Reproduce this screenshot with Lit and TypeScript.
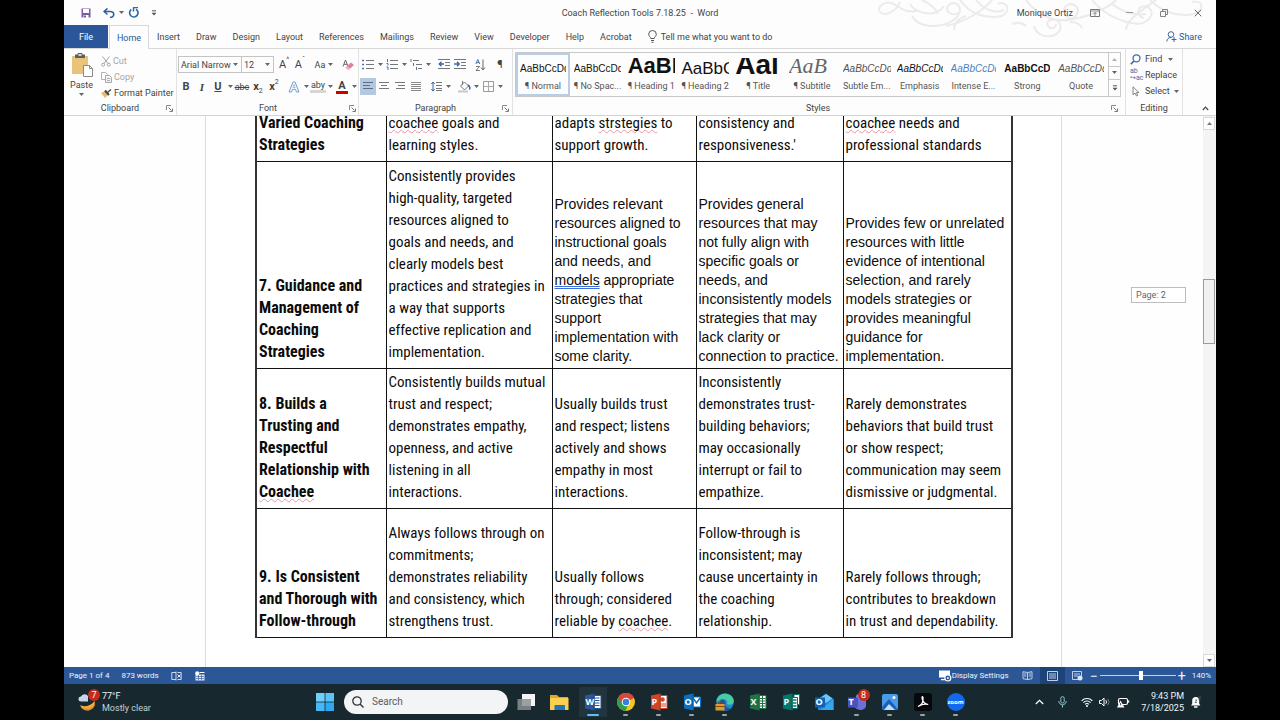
import { LitElement, html, css, svg, nothing } from "lit";
import { customElement } from "lit/decorators.js";
import { classMap } from "lit/directives/class-map.js";

const icon = (w: number, h: number, body: unknown) =>
  html`<svg width=${w} height=${h} viewBox="0 0 ${w} ${h}" fill="none" aria-hidden="true">${body}</svg>`;

const caret = icon(5, 3, svg`<path d="M0 0h5L2.500 3z" fill="#666"/>`);

const lines = (rows: [number, number, number][], color = "#777") =>
  rows.map(([x, y, w]) => svg`<path d="M${x} ${y}h${w}" stroke=${color} />`);

const icons = {
  save: icon(10, 10, svg`<path d="M.5.5h9v9h-9z" fill="#7d5aa6"/><path d="M2 1h6v4H2z" fill="#fff"/><path d="M2.500 7h5v3h-5z" fill="#fff"/><path d="M3 7.500h2v2H3z" fill="#7d5aa6"/>`),
  undo: icon(12, 10, svg`<path d="M1 3.500h6c5 0 5 5.500 0 6" stroke="#2f5f9f" stroke-width="1.600"/><path d="M4.500.5L1.200 3.500l3.300 3" stroke="#2f5f9f" stroke-width="1.600"/>`),
  redo: icon(11, 11, svg`<path d="M3.200 2.500A4.200 4.200 0 1 0 8 2.200" stroke="#2f6ea5" stroke-width="1.700"/><path d="M5 .5h5M5.500.5v4" stroke="#2f6ea5" stroke-width="1.500"/>`),
  custom: icon(6, 6, svg`<path d="M1 .8h4" stroke="#555"/><path d="M.5 2.800h5L3 5.500z" fill="#555"/>`),
  paste: icon(22, 24, svg`<path d="M1 3h16v18H1z" fill="#eac37a"/><path d="M4 1.500h2.500a2.500 2 0 0 1 5 0H14V5H4z" fill="#5e5e5e"/><path d="M7.500 1.200h3v1.500h-3z" fill="#fff"/><path d="M12.500 12.500h6l3 3v8h-9z" fill="#fff" stroke="#8a8a8a"/><path d="M18.500 12.500v3h3" stroke="#8a8a8a"/>`),
  cut: icon(10, 11, svg`<path d="M1.500.5l5.500 7M8.500.5L3 7.500" stroke="#a5a5a5"/><circle cx="2.200" cy="8.700" r="1.500" stroke="#a5a5a5"/><circle cx="7.800" cy="8.700" r="1.500" stroke="#a5a5a5"/>`),
  copy: icon(11, 11, svg`<path d="M.5.5h4l2 2v5h-6z" fill="#fff" stroke="#b0b0b0"/><path d="M4.500 3.500h4l2 2v5h-6z" fill="#f4f4f4" stroke="#a8a8a8"/><path d="M6 6.500h3M6 8.500h3" stroke="#b0b0b0"/>`),
  painter: icon(11, 9, svg`<path d="M0 4l4-2 3 4-3 3z" fill="#e8b872"/><path d="M4 1.500l4 4.500" stroke="#444" stroke-width="2"/><path d="M6.500 3.500L10 .5" stroke="#555" stroke-width="1.600"/>`),
  eraser: icon(12, 12, svg`<path d="M1 7.500L3.500 1 6 7.500M2 5.300h3" stroke="#666"/><path d="M3.500 8.500L9 3.500l3 2.500-5.500 5z" fill="#e07f98"/><path d="M3.500 8.500l3 2.500 1.700-1.500-3-2.500z" fill="#f0b8c6"/>`),
  effectA: icon(12, 12, svg`<path d="M1 11L5 1h2l4 10H8.500l-1-2.700h-3l-1 2.700z" stroke="#6f9fd0"/><path d="M4.800 6.500L6 3.300l1.200 3.200z" fill="#fff" stroke="#6f9fd0" stroke-width=".6"/>`),
  bullets: icon(12, 11, svg`<path d="M0 1.500h2M0 5.500h2M0 9.500h2" stroke="#4a77ad" stroke-width="1.600"/>${lines([[4, 1.5, 8], [4, 5.5, 8], [4, 9.5, 8]])}`),
  numbers: icon(12, 11, svg`<path d="M1.500 0v3M.5 4.500h1.500v2M.5 8h1.500v3" stroke="#4a77ad"/>${lines([[4, 1.5, 8], [4, 5.5, 8], [4, 9.5, 8]])}`),
  multi: icon(12, 11, svg`<path d="M1 0v3M3.500 4v3M6.500 8v3" stroke="#4a77ad"/>${lines([[3, 1.5, 6], [6, 5.5, 6], [8, 9.5, 4]])}`),
  outdent: icon(12, 11, svg`${lines([[0, 0.5, 12], [7, 3.5, 5], [7, 6.5, 5], [0, 9.5, 12]])}<path d="M6 5H1.500M3.500 2.800L1.200 5l2.300 2.200" stroke="#3568a5" stroke-width="1.300"/>`),
  indent: icon(12, 11, svg`${lines([[0, 0.5, 12], [7, 3.5, 5], [7, 6.5, 5], [0, 9.5, 12]])}<path d="M0 5h5M3 2.800L5.300 5 3 7.200" stroke="#3568a5" stroke-width="1.300"/>`),
  sort: icon(11, 12, svg`<path d="M.8 5L2.800.5 4.800 5M1.500 3.600h2.600" stroke="#3568a5" stroke-width=".9"/><path d="M1 7.500h3.500L1 11.500h3.800" stroke="#666" stroke-width=".9"/><path d="M8 .5v10M6 8.500l2 2.500 2-2.500" stroke="#666"/>`),
  left: icon(10, 9, lines([[0, 0.5, 10], [0, 3.5, 7], [0, 6.5, 10]], "#5c6e86")),
  center: icon(10, 9, lines([[0, 0.5, 10], [2, 3.5, 6], [0, 6.5, 10]])),
  right: icon(10, 9, lines([[0, 0.5, 10], [3, 3.5, 7], [1, 6.5, 9]])),
  justify: icon(10, 9, lines([[0, 0.5, 10], [0, 2.5, 10], [0, 4.5, 10], [0, 6.5, 10], [0, 8.5, 10]], "#8a8a8a")),
  spacing: icon(11, 11, svg`<path d="M2 1v9M.3 3L2 1l1.700 2M.3 8L2 10l1.700-2" stroke="#3568a5"/>${lines([[5, 1.5, 6], [5, 4.5, 6], [5, 7.5, 6], [5, 9.5, 6]])}`),
  shading: icon(13, 12, svg`<path d="M2.500 5L6.500 1l4 4-4 4z" stroke="#777"/><path d="M4.500 0v4" stroke="#777"/><path d="M10 4c2 1 2 3 1.500 4.500" stroke="#3568a5" stroke-width="1.500"/><path d="M0 10.500h10" stroke="#c8c8c8" stroke-width="2"/>`),
  borders: icon(11, 11, svg`<path d="M.5.5h10v10H.5z" stroke="#999"/><path d="M5.500 1v9M1 5.500h9" stroke="#aaa"/>`),
  find: icon(11, 11, svg`<circle cx="6.500" cy="4.300" r="3.500" stroke="#3f6ea8" stroke-width="1.300"/><path d="M4 7L.8 10.200" stroke="#3f6ea8" stroke-width="1.700"/>`),
  select: icon(11, 11, svg`<path d="M3 .8v8l2-1.800 1.500 3 1.200-.6L6.400 6.500H9z" stroke="#777" stroke-width=".9"/>`),
  launcher: icon(7, 7, svg`<path d="M.5 5V.5H5" stroke="#888"/><path d="M2.500 2.500l3 3M6.500 3.500v3h-3" stroke="#777"/>`),
  bulb: icon(9, 13, svg`<path d="M2.800 8.500C2.800 7 .7 6.500.7 4.200a3.800 3.700 0 0 1 7.600 0C8.300 6.500 6.200 7 6.200 8.500zM3 10.500h3M3.500 12.300h2" stroke="#444" stroke-width=".9"/>`),
  share: icon(11, 11, svg`<circle cx="5" cy="3.500" r="2.800" stroke="#3f64a0"/><path d="M.8 10.500C1 8 2.500 6.500 5 6.500M8 6v5M5.500 8.500h5" stroke="#3f64a0"/>`),
  display: icon(10, 8, svg`<path d="M.5.5h9v7h-9z" stroke="#777"/><path d="M.5 2h9M5 7V3.500M3.500 5L5 3.500 6.500 5" stroke="#777" stroke-width=".8"/>`),
  min: icon(8, 8, svg`<path d="M0 3.500h7" stroke="#999"/>`),
  restore: icon(8, 8, svg`<path d="M.5 2.500h5v5h-5zM2.500 2.500v-2h5v5h-2" stroke="#777" stroke-width=".9"/>`),
  close: icon(8, 8, svg`<path d="M.8.8l6.500 6.500M7.300.8L.8 7.300" stroke="#666"/>`),
  chevUp: icon(7, 5, svg`<path d="M.8 4L3.500 1.200 6.200 4" stroke="#444" stroke-width="1.200"/>`),
  up: icon(5, 3, svg`<path d="M0 3h5L2.500 0z" fill="#777"/>`),
  upSoft: icon(5, 3, svg`<path d="M0 3h5L2.500 0z" fill="#b0b0b0"/>`),
  proof: icon(11, 10, svg`<path d="M5 1.500H.8v7H5M5 .5v9M6.500 1.500h3.700v7H6.500" stroke="#dfe7f5" stroke-width=".9"/><path d="M6.500 3.500l3 3M9.500 3.500l-3 3" stroke="#fff" stroke-width=".9"/>`),
  macro: icon(10, 10, svg`<path d="M.5 3.500h9v6h-9z" fill="#dfe7f5"/><circle cx="2.200" cy="2.200" r="2" fill="#fff"/><path d="M4.500 1.500h5" stroke="#fff"/><path d="M1 5.500h8M1 7.500h8M3.500 4v5M6.500 4v5" stroke="#2b579a" stroke-width=".6"/>`),
  dispSet: icon(13, 12, svg`<path d="M0 .5h11v7H0zM2 9h5v1.300H2z" fill="#fff"/><circle cx="8.800" cy="8" r="3" fill="#2b579a" stroke="#fff" stroke-width="1.200"/><circle cx="8.800" cy="8" r="1" fill="#fff"/>`),
  read: icon(11, 9, svg`<path d="M5.500 1.500L1 .7v7l4.500.8 4.500-.8v-7zM5.500 1.500v7M2 3h2.300M2 5h2.300M6.800 3H9M6.800 5H9" stroke="#cfdcf0" stroke-width=".9"/>`),
  print: icon(11, 10, svg`<path d="M.5.5h10v9H.5zM2 3h7M2 5h7M2 7h7" stroke="#d5e0f2" stroke-width=".9"/>`),
  web: icon(11, 10, svg`<path d="M.5.5h9v8h-9zM2 3h6M2 5h4" stroke="#cfdcf0" stroke-width=".9"/><circle cx="8" cy="7" r="2.500" fill="#dbe5f5"/>`),
  weather: icon(19, 19, svg`<path d="M16.500 8a7.500 7.500 0 0 1-14.500 4c3 2 10 2 14.500-4z" fill="#f3a93c"/><path d="M4 14.500c6 3 12 0 13-5 1 6-8 11-13 5z" fill="#e9892a"/><path d="M3 8.500a2.500 2.500 0 0 1 0-5 4 4 0 0 1 7-.5v5.500z" fill="#c9d3ee"/>`),
  windows: icon(18, 18, svg`<path d="M0 0h8.600v8.600H0z" fill="#6fd0fb"/><path d="M9.400 0H18v8.600H9.400z" fill="#58c4f8"/><path d="M0 9.400h8.600V18H0z" fill="#45b8f5"/><path d="M9.400 9.400H18V18H9.400z" fill="#2fa8f0"/>`),
  search: icon(12, 12, svg`<circle cx="5" cy="5" r="4.200" stroke="#333" stroke-width="1.300"/><path d="M8 8l3.500 3.500" stroke="#333" stroke-width="1.400"/>`),
  chevTray: icon(9, 6, svg`<path d="M.8 5L4.500 1.300 8.200 5" stroke="#fff" stroke-width="1.300"/>`),
  mic: icon(9, 12, svg`<rect x="2.800" y=".6" width="3.400" height="6.500" rx="1.700" stroke="#8cc6cf"/><path d="M.8 5c0 5 7.400 5 7.400 0M4.500 9v2.500" stroke="#8cc6cf"/>`),
  wifi: icon(12, 10, svg`<path d="M.6 3.800a7.600 7.600 0 0 1 10.800 0M2.400 5.600a5 5 0 0 1 7.200 0M4.100 7.300a2.600 2.600 0 0 1 3.800 0" stroke="#fff" stroke-width="1.100"/><circle cx="6" cy="9" r="1" fill="#fff"/>`),
  sound: icon(12, 10, svg`<path d="M.5 3.500h2L5 1v8L2.500 6.500h-2z" stroke="#fff"/><path d="M6.800 3.200q1.500 1.800 0 3.600" stroke="#fff"/><path d="M8.700 1.700q3 3.300 0 6.600" stroke="#6b7b80"/>`),
  battery: icon(13, 11, svg`<rect x="1.500" y="1.500" width="9" height="6" rx="1.500" stroke="#fff" stroke-width="1.200"/><path d="M11.500 3.500v2" stroke="#fff" stroke-width="1.500"/><path d="M3.500 3.500L7.500 10.500H0z" fill="#fff"/><path d="M3.600 6v2.300" stroke="#182a31" stroke-width=".8"/>`),
  bell: icon(12, 12, svg`<path d="M1 9.500l1.200-1.700V4.500a3.500 3.500 0 0 1 7 0v3.300l1.200 1.700z" fill="#fff"/><path d="M4 11h3.500" stroke="#fff" stroke-width="1.500"/><path d="M5 4h2L5 6.500h2M8.500 1h2.300L8.500 3.200h2.300" stroke="#4b5b60" stroke-width=".8"/>`),
};

const office = (color: string, dark: string, page: unknown) =>
  icon(18, 18, svg`${page}<path d="M1 2.500L10.500.5v17L1 15.500z" fill=${color}/><path d="M9.500.7l1-.2v17l-1-.2z" fill=${dark}/>`);

const ruled = (c: string) => svg`<path d="M10 2.500h7v13h-7z" fill="#fff" stroke=${c}/><path d="M11 5h4.500M11 7.500h4.500M11 10h4.500M11 12.500h4.500" stroke=${c}/>`;

interface App { name: string; art: unknown; running?: boolean; active?: boolean; letter?: string; badge?: string; }

const apps: App[] = [
  { name: "Task view", art: icon(19, 18, svg`<path d="M5 1h13v12H5z" fill="#f4f4f4"/><path d="M.5 6H14v11H.5z" fill="#8b8f92" opacity=".85"/>`) },
  { name: "File Explorer", art: icon(19, 18, svg`<path d="M0 2h7l2 2h9v4H0z" fill="#e3a524"/><path d="M0 5h18.500v12H0z" fill="#fbd050"/><path d="M4.500 12h10.500v5H4.500z" fill="#2476b8"/>`) },
  { name: "Word", active: true, running: true, letter: "W", art: office("#2b579a", "#1f4683", ruled("#2b579a")) },
  { name: "Chrome", running: true, art: icon(18, 18, svg`<circle cx="9" cy="9" r="9" fill="#f5c51f"/><path d="M9 9L1.200 4.500A9 9 0 0 1 16.800 4.500L17 5z" fill="#dd4538"/><path d="M9 9L1.200 4.500A9 9 0 0 0 8.500 18L12 10z" fill="#2f9e50"/><path d="M9 5h8.100A9 9 0 0 0 1.200 4.500L5.500 11z" fill="#dd4538"/><circle cx="9" cy="9" r="4.300" fill="#fff"/><circle cx="9" cy="9" r="3.300" fill="#3c7de0"/>`) },
  { name: "PowerPoint", running: true, letter: "P", art: office("#d04526", "#a93519", svg`<path d="M10 2.500h7v13h-7z" fill="#fff" stroke="#d04526"/><circle cx="12.500" cy="6.500" r="2.300" fill="#d04526"/><path d="M11 11h5M11 13h5" stroke="#d04526"/>`) },
  { name: "Outlook", running: true, letter: "O", art: office("#0b6fc2", "#0a5ca0", svg`<path d="M9 4h8.500v10H9z" fill="#fff" stroke="#0b6fc2"/><path d="M10 5l3.500 5L17 5" stroke="#0b6fc2" stroke-width="1.500"/>`) },
  { name: "Edge", running: true, art: icon(19, 18, svg`<circle cx="10" cy="9" r="8.800" fill="#2389cf"/><path d="M1.500 8C3-2 18-1 18.800 8c0 4-5 4.500-7 3 2-4-3-6-6-4.500C3.500 7.500 2 9 1.500 8z" fill="#49c9a5"/><path d="M6 7c-3 3-2 8 2 10.500 3 1 6 0 8-2.500-4 1-7-2-5.500-5C10 7 8 6 6 7z" fill="#17599c"/><path d="M.5 11h9v6.500h-9z" fill="#e39a2d"/><path d="M.5 13.500h9M3.500 11v-1.500h3V11" stroke="#7a4b12"/>`) },
  { name: "Excel", letter: "X", art: office("#217346", "#185c37", svg`<path d="M10 2.500h7v13h-7z" fill="#fff" stroke="#217346"/><path d="M11 5.500h5.500M11 8h5.500M11 10.500h5.500M11 13h5.500M13.500 3v12" stroke="#217346"/>`) },
  { name: "Publisher", letter: "P", art: office("#077568", "#055d53", svg`<path d="M12 1.500h5.500v10H12z" fill="#fff" stroke="#077568"/><path d="M10 4.500h5.500v11H10z" fill="#fff" stroke="#077568"/><path d="M11 7h3.500M11 10h3.500M11 13h3.500" stroke="#077568" stroke-width="1.300"/>`) },
  { name: "New Outlook", letter: "O", art: icon(20, 18, svg`<path d="M4 6l8-5.500L19.500 6v11H4z" fill="#1a86d8"/><path d="M6 5l6-4 6.500 4.500L12 10z" fill="#6cc6f5"/><path d="M19.500 6v11H6z" fill="#35a5ec"/><path d="M1 4.500h10v10H1z" fill="#0f63b5"/>`) },
  { name: "Teams", running: true, letter: "T", badge: "8", art: icon(20, 18, svg`<circle cx="12" cy="4" r="3" fill="#7b83eb"/><path d="M7 6.500h12v6c0 5-8 6-11 2z" fill="#6b6fd6"/><path d="M1 4.500h10v10H1z" fill="#4b53bc"/>`) },
  { name: "Photos", running: true, art: icon(18, 18, svg`<rect x="1" y="1" width="16" height="16" rx="2" fill="#4a9bea"/><path d="M1 14L8 6l9 10.500H2z" fill="#1c5fb8"/><path d="M3 17l5-6 6 6z" fill="#bfe0fb"/><circle cx="13" cy="4.500" r="1.500" fill="#fff"/>`) },
  { name: "Acrobat", running: true, art: icon(18, 18, svg`<rect width="18" height="18" rx="3" fill="#06080c"/><path d="M4 13.500c4-1.500 5.500-5 5-9-.3-1.500-1.500-1-.8 1.500.8 3 3 5 6 5.500-3-1-7 0-10.200 2z" stroke="#fff" stroke-width="1.200"/>`) },
  { name: "Zoom", running: true, letter: "zoom", art: icon(18, 18, svg`<circle cx="9" cy="9" r="9" fill="#1468f0"/>`) },
];

const tabs = ["Home", "Insert", "Draw", "Design", "Layout", "References", "Mailings", "Review", "View", "Developer", "Help", "Acrobat"];

const gallery: [string, string, string][] = [
  ["AaBbCcDd", "¶ Normal", ""],
  ["AaBbCcDd", "¶ No Spac...", ""],
  ["AaBb", "¶ Heading 1", "h1"],
  ["AaBbC", "¶ Heading 2", "h2"],
  ["Aal", "¶ Title", "title"],
  ["AaB", "¶ Subtitle", "subtitle"],
  ["AaBbCcDd", "Subtle Em...", "it soft"],
  ["AaBbCcDd", "Emphasis", "it"],
  ["AaBbCcDd", "Intense E...", "it blue"],
  ["AaBbCcD", "Strong", "bold"],
  ["AaBbCcDd", "Quote", "it soft"],
];

const sp = (t: string) => html`<span class="spell">${t}</span>`;

const rows: { cls: string; head: unknown; cells: unknown[]; wide?: boolean }[] = [
  {
    cls: "r6",
    head: html`Varied Coaching<br>Strategies`,
    cells: [
      html`${sp("coachee")} goals and<br>learning styles.`,
      html`adapts ${sp("strstegies")} to<br>support growth.`,
      html`consistency and<br>responsiveness.'`,
      html`${sp("coachee")} needs and<br>professional standards`,
    ],
  },
  {
    cls: "r7",
    wide: true,
    head: html`7. Guidance and<br>Management of<br>Coaching<br>Strategies`,
    cells: [
      html`Consistently provides<br>high-quality, targeted<br>resources aligned to<br>goals and needs, and<br>clearly models best<br>practices and strategies in<br>a way that supports<br>effective replication and<br>implementation.`,
      html`Provides relevant<br>resources aligned to<br>instructional goals<br>and needs, and<br><span class="grammar">models</span> appropriate<br>strategies that<br>support<br>implementation with<br>some clarity.`,
      html`Provides general<br>resources that may<br>not fully align with<br>specific goals or<br>needs, and<br>inconsistently models<br>strategies that may<br>lack clarity or<br>connection to practice.`,
      html`Provides few or unrelated<br>resources with little<br>evidence of intentional<br>selection, and rarely<br>models strategies or<br>provides meaningful<br>guidance for<br>implementation.`,
    ],
  },
  {
    cls: "r8",
    head: html`8. Builds a<br>Trusting and<br>Respectful<br>Relationship with<br>${sp("Coachee")}`,
    cells: [
      html`Consistently builds mutual<br>trust and respect;<br>demonstrates empathy,<br>openness, and active<br>listening in all<br>interactions.`,
      html`Usually builds trust<br>and respect; listens<br>actively and shows<br>empathy in most<br>interactions.`,
      html`Inconsistently<br>demonstrates trust-<br>building behaviors;<br>may occasionally<br>interrupt or fail to<br>empathize.`,
      html`Rarely demonstrates<br>behaviors that build trust<br>or show respect;<br>communication may seem<br>dismissive or judgmental.`,
    ],
  },
  {
    cls: "r9",
    head: html`9. Is Consistent<br>and Thorough with<br>Follow-through`,
    cells: [
      html`Always follows through on<br>commitments;<br>demonstrates reliability<br>and consistency, which<br>strengthens trust.`,
      html`Usually follows<br>through; considered<br>reliable by ${sp("coachee")}.`,
      html`Follow-through is<br>inconsistent; may<br>cause uncertainty in<br>the coaching<br>relationship.`,
      html`Rarely follows through;<br>contributes to breakdown<br>in trust and dependability.`,
    ],
  },
];

const shared = css`
  * { box-sizing: border-box; }
  button, input, select { font: inherit; color: inherit; background: none; border: 0; margin: 0; padding: 0; }
  button, a { white-space: nowrap; }
  svg { display: block; flex: none; }
`;

@customElement("word-titlebar")
class WordTitlebar extends LitElement {
  static styles = [shared, css`
    :host { display: block; position: relative; background: #fdfdfd; color: #444; }
    .swirl { position: absolute; right: 0; top: 0; }
    .bar { position: relative; display: grid; grid-template-columns: 1fr auto 1fr; align-items: center; height: 25px; }
    .quick { display: flex; align-items: center; gap: 4px; padding-left: 17px; }
    .quick button { display: flex; }
    .quick .gap { margin-left: 8px; }
    .win { display: flex; align-items: center; justify-content: flex-end; padding-right: 14px; gap: 26px; }
    .win .user { margin-right: -9px; }
    .tabs { position: relative; display: flex; height: 24px; border-bottom: 1px solid #d8d8d8; align-items: stretch; }
    .tabs button { padding: 0 8px; }
    .tabs .file { background: #2b579a; color: #fff; width: 44px; }
    .tabs .on { color: #2b579a; background: #fdfdfd; border: 1px solid #d8d8d8; border-bottom: 0; margin-bottom: -1px; margin-left: 1px; width: 40px; padding: 0; }
    .tabs .tell { display: flex; align-items: center; gap: 4px; }
    .tabs .share { display: flex; align-items: center; gap: 2px; margin-left: auto; padding: 0 14px; color: #2b579a; }
  `];
  render() {
    return html`
      <svg class="swirl" width="340" height="40" viewBox="0 0 340 40" fill="none" stroke="#edeaed" stroke-width="2" aria-hidden="true">
        <path d="M24 2C20 12 8 17 4 12 0 6 10 0 18 4c8 6 16 10 24 6"/>
        <path d="M36 16c6 12 30 14 44 2 8-8 2-18-6-14-8 6 2 14 10 8M34 4c6 10 26 14 34 2M46 0c8 4 14 8 16 14"/>
        <path d="M70 26C90 22 108 10 116 0M84 0c8 12 24 20 42 16 10-6 4-16-4-12M78 30c0-8 6-12 12-14M100 0c8 10 20 14 28 10"/>
        <path d="M150 0c10 14 26 22 42 20 14-4 12-16 2-16-8 2-8 12 0 14M136 24c6-2 10-2 14 2"/>
        <path d="M158 26c4 16 30 12 26-2-4-8-16-4-12 2 2 4 8 2 8-2M194 22c6 0 10 2 12 6"/>
        <path d="M190 20c22-2 42-12 50-20M216 0c8 10 24 22 46 24 14-2 18-14 8-18-10 0-10 10-2 12"/>
        <path d="M250 30c0-10 16-20 30-30M274 0c10 10 26 18 44 14 12-6 8-14-2-12M236 4c8 6 20 12 34 10"/>
      </svg>
      <div class="bar">
        <div class="quick">
          <button aria-label="Save">${icons.save}</button>
          <button class="gap" aria-label="Undo">${icons.undo}</button>
          <button aria-label="Undo options">${caret}</button>
          <button aria-label="Redo">${icons.redo}</button>
          <button class="gap" aria-label="Customize toolbar">${icons.custom}</button>
        </div>
        <div>Coach Reflection Tools 7.18.25&nbsp; -&nbsp; Word</div>
        <div class="win">
          <span class="user">Monique Ortiz</span>
          <button aria-label="Ribbon display">${icons.display}</button>
          <button aria-label="Minimize">${icons.min}</button>
          <button aria-label="Restore">${icons.restore}</button>
          <button aria-label="Close">${icons.close}</button>
        </div>
      </div>
      <nav class="tabs">
        <button class="file">File</button>
        ${tabs.map((t, i) => html`<button class=${classMap({ on: i === 0 })}>${t}</button>`)}
        <button class="tell">${icons.bulb}Tell me what you want to do</button>
        <button class="share">${icons.share}Share</button>
      </nav>`;
  }
}

@customElement("word-ribbon")
class WordRibbon extends LitElement {
  static styles = [shared, css`
    :host { box-sizing: border-box; display: flex; height: 67px; background: #fdfdfd; color: #444; border-bottom: 1px solid #d4d4d4; }
    .group { display: grid; grid-template-rows: 1fr 14px; border-right: 1px solid #e2e2e2; }
    .foot { display: grid; grid-template-columns: 10px 1fr 10px; text-align: center; align-items: center; }
    .clip { width: 113px; }
    .clip .body { display: flex; padding-top: 4px; gap: 4px; }
    .paste { display: flex; flex-direction: column; align-items: center; width: 31px; margin-left: 2px; gap: 2px; line-height: 12px; color: #444; }
    .list { display: flex; flex-direction: column; }
    .list button { display: flex; align-items: center; gap: 2px; height: 16px; }
    .dim { color: #a5a5a5; }
    .rows { display: grid; grid-template-rows: 17px 17px; row-gap: 5px; padding: 7px 1px 0; align-content: start; }
    .row { display: flex; align-items: center; }
    .row button { display: flex; align-items: center; justify-content: center; height: 17px; width: 16px; }
    .row .c { width: 8px; }
    .row .w { width: 24px; gap: 3px; }
    .sep { width: 4px; }
    .field { position: relative; display: flex; align-items: center; border: 1px solid #c4c4c4; height: 17px; margin-right: -1px; }
    .field select { appearance: none; height: 15px; width: 100%; padding: 0 2px; }
    .field svg { position: absolute; right: 3px; top: 6px; }
    .name { width: 64px; }
    .size { width: 33px; margin-right: 2px; }
    .font { width: 182px; }
    .para { width: 154px; }
    .ltr { font-size: 11px; }
    .sm { font-size: 7px; line-height: 8px; align-self: flex-start; }
    .lo { align-self: flex-end; }
    .b { font-weight: 700; }
    .i { font-style: italic; font-family: "Liberation Serif", serif; font-weight: 700; }
    .u { text-decoration: underline; font-weight: 700; }
    .s { text-decoration: line-through; }
    .red { border-bottom: 3px solid #c00; line-height: 11px; font-weight: 700; padding: 0 2px; font-size: 11px; }
    .hl { border-bottom: 3px solid #d6d6d6; line-height: 10px; padding: 0 1px; }
    .row .pressed { background: #b4c8e0; }
    .styles { flex: 1; min-width: 0; padding: 0 4px 0 2px; }
    .gallery { display: flex; border: 1px solid #c8c8c8; height: 45px; margin-top: 3px; }
    .items { display: grid; grid-template-columns: repeat(11, 1fr); flex: 1; min-width: 0; }
    .style { display: grid; grid-template-rows: 25px 14px; min-width: 0; padding: 0 2px; color: #555; text-align: center; border: 2px solid transparent; }
    .style.sel { border-color: #b9cde6; }
    .prev { display: flex; align-items: center; overflow: hidden; margin-top: 3px; color: #111; font: 10px/14px "Liberation Sans", Arial, sans-serif; white-space: nowrap; }
    .h1 { font-size: 22px; font-weight: 700; align-items: flex-start; line-height: 16px; }
    .h2 { font-size: 17px; }
    .title { font-size: 28px; font-weight: 700; align-items: flex-start; line-height: 14px; }
    .subtitle { font: italic 22px/16px "Liberation Serif", serif; color: #666; align-items: flex-start; }
    .it { font-style: italic; }
    .soft { color: #555; }
    .blue { color: #4f81bd; }
    .bold { font-weight: 700; }
    .scroll { display: grid; width: 12px; border-left: 1px solid #c8c8c8; }
    .scroll button { display: grid; place-items: center; }
    .scroll button + button { border-top: 1px solid #c8c8c8; }
    .edit { width: 57px; }
    .edit .list { padding: 2px 0 0 4px; }
    .edit .list button { gap: 4px; }
    .ab { font-size: 7px; line-height: 7px; color: #3f6ea8; text-align: left; width: 11px; }
    .end { width: 33px; display: flex; align-items: flex-end; justify-content: flex-end; padding: 0 7px 4px 0; }
  `];
  private btn(body: unknown, label: string, cls = "") {
    return html`<button class=${cls} aria-label=${label}>${body}</button>`;
  }
  private foot(label: string, launch = true) {
    return html`<div class="foot"><span></span><span>${label}</span>${launch ? this.btn(icons.launcher, label + " options") : nothing}</div>`;
  }
  private drop(label: string) {
    return this.btn(caret, label + " options", "c");
  }
  render() {
    return html`
      <section class="group clip">
        <div class="body">
          <button class="paste">${icons.paste}<span>Paste</span>${caret}</button>
          <div class="list">
            <button class="dim">${icons.cut}Cut</button>
            <button class="dim">${icons.copy}Copy</button>
            <button>${icons.painter}Format Painter</button>
          </div>
        </div>
        ${this.foot("Clipboard")}
      </section>
      <section class="group font">
        <div class="rows">
          <div class="row">
            <label class="field name"><select aria-label="Font"><option>Arial Narrow</option></select>${caret}</label>
            <label class="field size"><select aria-label="Font size"><option>12</option></select>${caret}</label>
            ${this.btn(html`<span class="ltr">A</span><span class="sm">^</span>`, "Grow font")}
            ${this.btn(html`<span class="ltr">A</span><span class="sm">ˇ</span>`, "Shrink font")}
            <span class="sep"></span>
            ${this.btn(html`Aa${caret}`, "Change case", "w")}
            <span class="sep"></span>
            ${this.btn(icons.eraser, "Clear formatting")}
          </div>
          <div class="row">
            ${this.btn(html`<span class="ltr b">B</span>`, "Bold")}
            ${this.btn(html`<span class="ltr i">I</span>`, "Italic")}
            ${this.btn(html`<span class="ltr u">U</span>`, "Underline")}
            ${this.drop("Underline")}
            ${this.btn(html`<span class="s">abc</span>`, "Strikethrough")}
            ${this.btn(html`<b class="ltr">x</b><span class="sm lo">2</span>`, "Subscript")}
            ${this.btn(html`<b class="ltr">x</b><span class="sm">2</span>`, "Superscript")}
            <span class="sep"></span>
            ${this.btn(icons.effectA, "Text effects")}${this.drop("Text effects")}
            ${this.btn(html`<span class="hl">aby</span>`, "Highlight")}${this.drop("Highlight")}
            ${this.btn(html`<span class="red">A</span>`, "Font color")}${this.drop("Font color")}
          </div>
        </div>
        ${this.foot("Font")}
      </section>
      <section class="group para">
        <div class="rows">
          <div class="row">
            ${this.btn(icons.bullets, "Bullets")}${this.drop("Bullets")}
            ${this.btn(icons.numbers, "Numbering")}${this.drop("Numbering")}
            ${this.btn(icons.multi, "Multilevel list")}${this.drop("Multilevel list")}
            <span class="sep"></span>
            ${this.btn(icons.outdent, "Decrease indent")}${this.btn(icons.indent, "Increase indent")}
            <span class="sep"></span>
            ${this.btn(icons.sort, "Sort")}
            <span class="sep"></span>
            ${this.btn(html`<span class="ltr">¶</span>`, "Show marks")}
          </div>
          <div class="row">
            ${this.btn(icons.left, "Align left", "pressed")}${this.btn(icons.center, "Center")}${this.btn(icons.right, "Align right")}${this.btn(icons.justify, "Justify")}
            <span class="sep"></span>
            ${this.btn(icons.spacing, "Line spacing")}${this.drop("Line spacing")}
            <span class="sep"></span>
            ${this.btn(icons.shading, "Shading")}${this.drop("Shading")}
            ${this.btn(icons.borders, "Borders")}${this.drop("Borders")}
          </div>
        </div>
        ${this.foot("Paragraph")}
      </section>
      <section class="group styles">
        <div class="gallery">
          <div class="items">
            ${gallery.map(([p, l, c], i) => html`<button class=${classMap({ style: true, sel: i === 0 })}><span class="prev ${c}">${p}</span><span>${l}</span></button>`)}
          </div>
          <div class="scroll">
            ${this.btn(icons.upSoft, "Previous styles")}${this.btn(caret, "Next styles")}${this.btn(icons.custom, "More styles")}
          </div>
        </div>
        ${this.foot("Styles")}
      </section>
      <section class="group edit">
        <div class="list">
          <button>${icons.find}Find&nbsp;${caret}</button>
          <button><span class="ab">ab<br>↪ac</span>Replace</button>
          <button>${icons.select}Select${caret}</button>
        </div>
        ${this.foot("Editing", false)}
      </section>
      <div class="end">${this.btn(icons.chevUp, "Collapse ribbon")}</div>`;
  }
}

@customElement("word-document")
class WordDocument extends LitElement {
  static styles = [shared, css`
    :host { display: grid; grid-template-columns: 1fr 13px; position: relative; min-height: 0; overflow: hidden; background: #fefefe; }
    .canvas { display: flex; flex-direction: column; justify-content: flex-end; align-items: center; overflow: hidden; min-height: 0; }
    .page { display: flex; flex-direction: column; justify-content: flex-end; flex: 1 0 auto; width: 76%; max-width: 857px; padding: 0 48px 29px 49px; border: solid #dcdcdc; border-width: 0 1px; background: #fff; }
    table { border-collapse: collapse; table-layout: fixed; width: 100%; color: #0c0c0c; font: 14px/22px "Liberation Sans", Arial, sans-serif; }
    th, td { border: 1px solid #111; padding: 0 0 5px 2px; vertical-align: bottom; text-align: left; white-space: nowrap; }
    tr > :first-child { border-left: 2px solid #333; }
    tr > :last-child { border-right: 2px solid #333; }
    .k { width: 130px; }
    .a { width: 166px; }
    .b { width: 144px; }
    .c { width: 147px; }
    .n { font-family: "Liberation Sans Narrow", "Arial Narrow", "Roboto Condensed", "Liberation Sans", sans-serif; font-size: 15px; }
    th.n { font-size: 16px; }
    .w { line-height: 19px; padding-bottom: 2px; }
    .r7 { height: 207px; }
    .r8 { height: 140px; }
    .r9 { height: 129px; }
    .spell { text-decoration: underline wavy #d8506490 1px; text-underline-offset: 1px; text-decoration-skip-ink: none; }
    .grammar { text-decoration: underline double #3b6fe0 1px; text-underline-offset: 1px; text-decoration-skip-ink: none; }
    .bar { display: grid; grid-template-rows: 13px 1fr 13px; padding: 1px 1px 0 0; background: #f4f4f4; }
    .bar button { display: grid; place-items: center; background: #fff; border: 1px solid #d8d8d8; }
    .track { display: grid; grid-template-rows: 149fr 65fr 310fr; }
    .thumb { grid-row: 2; background: #f0f0f0; border: 1px solid #9a9a9a; }
    .tip { position: absolute; right: 30px; top: 31%; width: 55px; height: 16px; padding: 0 4px; line-height: 15px; border: 1px solid #bdbdbd; background: #fff; color: #666; }
  `];
  render() {
    return html`
      <main class="canvas">
        <article class="page">
          <table>
            <colgroup><col class="k"><col class="a"><col class="b"><col class="c"><col></colgroup>
            <tbody>
              ${rows.map(r => html`<tr class=${r.cls}>
                <th class="n" scope="row">${r.head}</th>
                ${r.cells.map((c, i) => html`<td class=${r.wide && i > 0 ? "w" : "n"}>${c}</td>`)}
              </tr>`)}
            </tbody>
          </table>
        </article>
      </main>
      <div class="bar">
        <button aria-label="Scroll up">${icons.up}</button>
        <div class="track"><div class="thumb"></div></div>
        <button aria-label="Scroll down">${caret}</button>
      </div>
      <div class="tip" role="tooltip">Page: 2</div>`;
  }
}

@customElement("word-status")
class WordStatus extends LitElement {
  static styles = [shared, css`
    :host { display: flex; align-items: center; height: 17px; padding: 0 5px; background: #2b5797; color: #eef3fb; font-size: 8px; }
    .item { margin-right: 12px; }
    button { display: flex; align-items: center; }
    .icons { display: flex; gap: 13px; }
    .right { display: flex; align-items: center; margin-left: auto; height: 17px; }
    .view { width: 25px; height: 17px; justify-content: center; }
    .first { margin-left: 6px; }
    .cur { background: #1d4378; }
    .zoom { display: flex; align-items: center; gap: 2px; }
    .zoom button { font-size: 14px; line-height: 12px; }
    input { appearance: none; width: 76px; height: 13px; background: linear-gradient(#c3d1e8, #c3d1e8) center / 100% 1px no-repeat; }
    input::-webkit-slider-thumb { appearance: none; width: 4px; height: 9px; background: #fff; }
    .pct { margin-left: 4px; }
  `];
  render() {
    return html`
      <span class="item">Page 1 of 4</span><span class="item">873 words</span>
      <span class="icons"><button aria-label="Proofing">${icons.proof}</button><button aria-label="Macros">${icons.macro}</button></span>
      <div class="right">
        <button>${icons.dispSet}Display Settings</button>
        <button class="view first" aria-label="Read mode">${icons.read}</button>
        <button class="view cur" aria-label="Print layout">${icons.print}</button>
        <button class="view" aria-label="Web layout">${icons.web}</button>
        <div class="zoom">
          <button aria-label="Zoom out">−</button>
          <input type="range" min="0" max="100" value="55" aria-label="Zoom">
          <button aria-label="Zoom in">+</button>
          <span class="pct">140%</span>
        </div>
      </div>`;
  }
}

@customElement("win-taskbar")
class WinTaskbar extends LitElement {
  static styles = [shared, css`
    :host { display: grid; grid-template-columns: 1fr auto 1fr; align-items: center; height: 36px; background: #17282f; color: #f2f5f6; }
    .weather { display: flex; align-items: center; gap: 5px; padding-left: 14px; line-height: 12px; text-align: left; }
    .glyph { position: relative; display: flex; }
    .badge { position: absolute; display: grid; place-items: center; width: 12px; height: 12px; border-radius: 50%; background: #c42b1c; color: #fff; font-size: 9px; line-height: 12px; right: -3px; top: -4px; }
    .dimmer { color: #c8d0d3; }
    .mid { display: flex; align-items: center; padding-left: 8px; }
    .start { display: flex; padding: 0 10px 0 0; }
    .search { display: flex; align-items: center; gap: 8px; width: 164px; height: 24px; padding: 0 8px; border-radius: 12px; background: #f2f4f5; color: #555; margin-right: 2px; }
    .search input { flex: 1; min-width: 0; font-size: 10px; outline: 0; }
    .search input::placeholder { color: #5c5c5c; }
    .app { position: relative; display: grid; place-items: center; width: 33px; height: 32px; }
    .app::after { content: ""; position: absolute; bottom: 2px; left: 14px; width: 5px; height: 2px; border-radius: 1px; }
    .run::after { background: #9aa4a8; }
    .act { background: linear-gradient(#22343d, #22343d) center / 28px 30px no-repeat; }
    .act::after { left: 11px; width: 12px; background: #5cc0f5; }
    .l { position: absolute; left: 2px; top: 4px; font: 700 9px/10px "Open Sans", sans-serif; color: #fff; }
    .l.z { left: 0; width: 18px; text-align: center; font-size: 6px; }
    .tray { display: flex; align-items: center; justify-content: flex-end; padding-right: 14px; }
    .tray svg { margin-left: 6px; }
    .tray .far { margin-left: 8px; }
    .time { text-align: right; line-height: 12px; margin: 0 0 0 11px; }
  `];
  render() {
    return html`
      <button class="weather">
        <span class="glyph">${icons.weather}<span class="badge">7</span></span>
        <span>77°F<br><span class="dimmer">Mostly clear</span></span>
      </button>
      <div class="mid">
        <button class="start" aria-label="Start">${icons.windows}</button>
        <label class="search">${icons.search}<input type="search" placeholder="Search" aria-label="Search"></label>
        ${apps.map(a => html`<button class=${classMap({ app: true, run: !!a.running, act: !!a.active })} aria-label=${a.name}>
          <span class="glyph">${a.art}${a.letter ? html`<span class=${classMap({ l: true, z: a.letter.length > 1 })}>${a.letter}</span>` : nothing}${a.badge ? html`<span class="badge">${a.badge}</span>` : nothing}</span>
        </button>`)}
      </div>
      <div class="tray">
        ${icons.chevTray}<span class="far">${icons.mic}</span><span class="far">${icons.wifi}</span>${icons.sound}${icons.battery}
        <span class="time">9:43 PM<br>7/18/2025</span>${icons.bell}
      </div>`;
  }
}

@customElement("app-root")
class AppRoot extends LitElement {
  static styles = css`
    :host { display: block; height: 100vh; padding: 0 5%; background: #000; font: 9px/12px Roboto, "Open Sans", sans-serif; }
    .window { display: grid; grid-template-rows: auto auto 1fr auto auto; height: 100%; overflow: hidden; }
  `;
  render() {
    return html`<div class="window">
      <word-titlebar></word-titlebar>
      <word-ribbon></word-ribbon>
      <word-document></word-document>
      <word-status></word-status>
      <win-taskbar></win-taskbar>
    </div>`;
  }
}
